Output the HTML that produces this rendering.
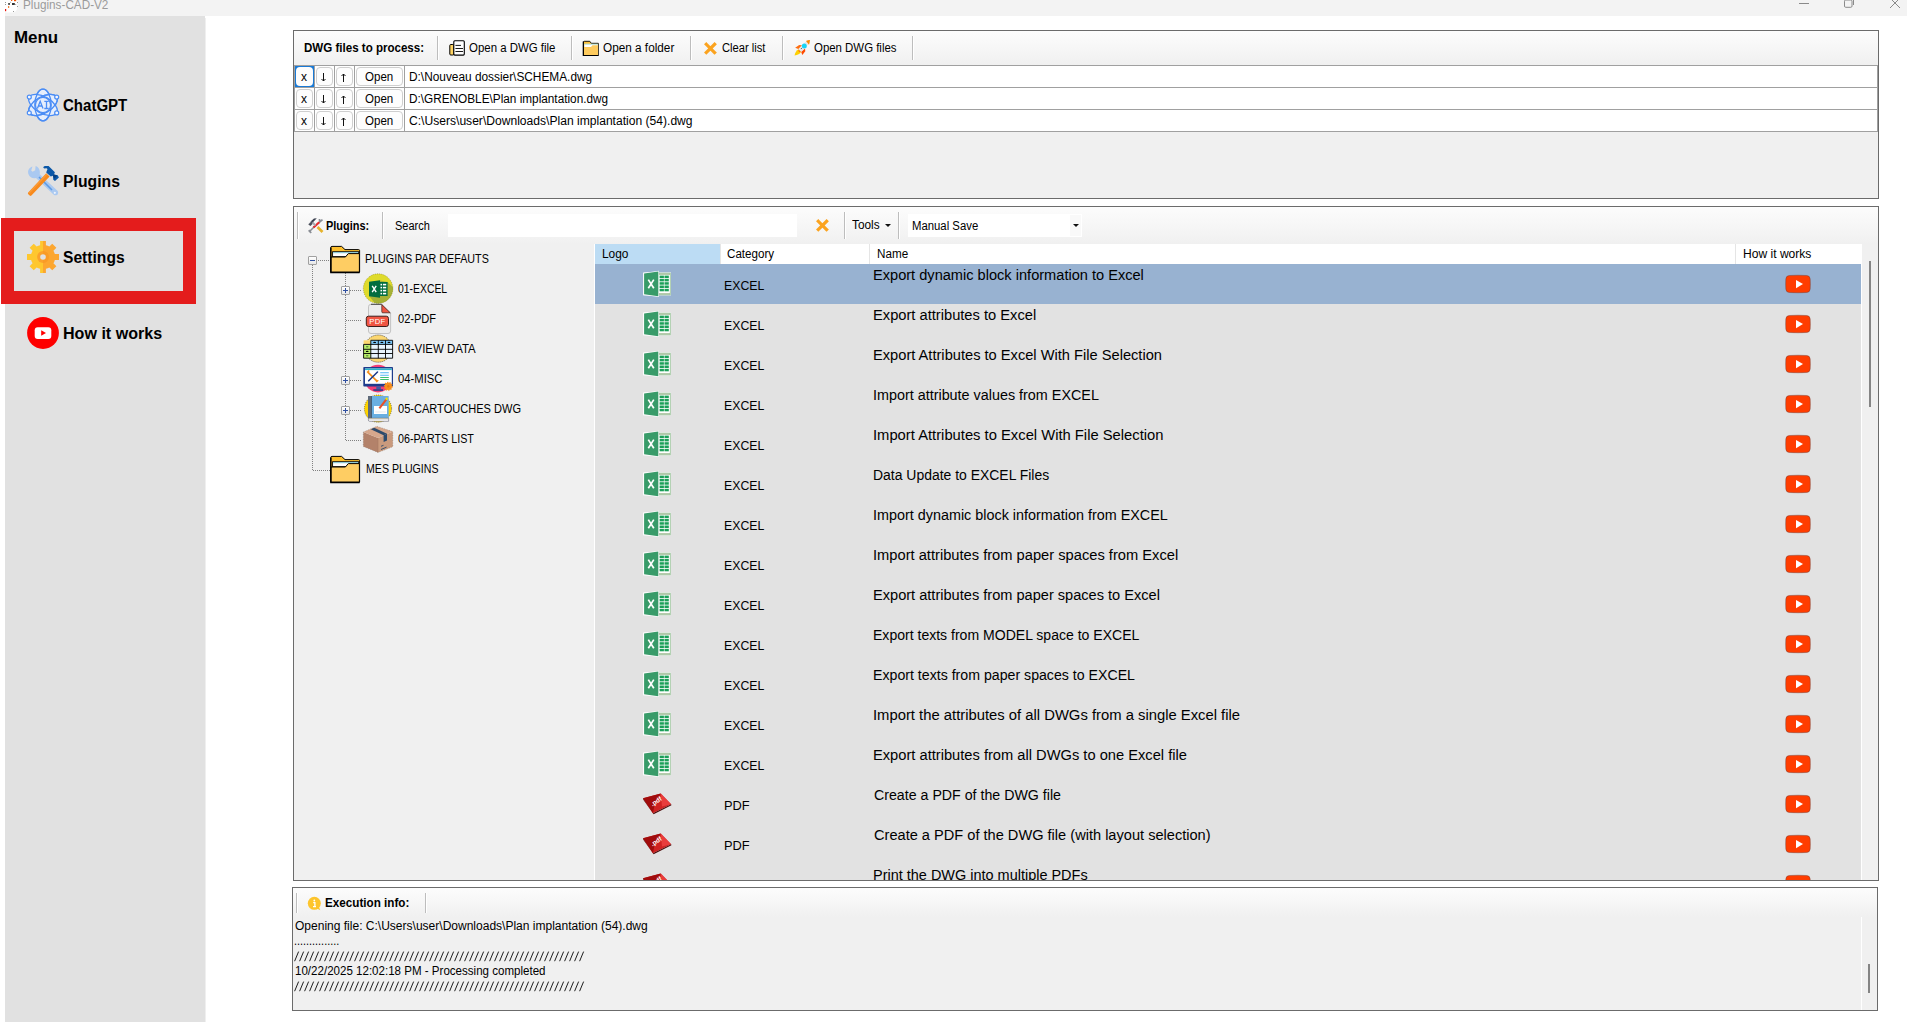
<!DOCTYPE html>
<html><head><meta charset="utf-8"><style>
html,body{margin:0;padding:0;}
body{width:1907px;height:1022px;position:relative;overflow:hidden;font-family:"Liberation Sans", sans-serif;background:#fff;}
svg{display:block}
</style></head><body>
<div style="position:absolute;left:0px;top:0px;width:1907px;height:1022px;background:#ffffff;"></div><div style="position:absolute;left:5px;top:0px;width:1902px;height:16px;background:#f3f3f3;"></div><div style="position:absolute;left:22.66px;top:-2px;font-size:12.5px;font-weight:normal;color:#9b9b9b;white-space:pre;line-height:normal;transform:scaleX(0.9384);transform-origin:0 0;">Plugins-CAD-V2</div><svg style="position:absolute;left:0px;top:0px;overflow:visible" width="20" height="14" viewBox="0 0 20 14"><path d="M5 0 H17.5 V6.5 Q17.5 12.5 11.5 12.5 H5 Z" fill="#fff"/>
<rect x="5" y="9" width="1.2" height="2.2" fill="#e8140c"/><rect x="8" y="6" width="1.2" height="2" fill="#f3843a"/>
<rect x="11" y="0" width="1.3" height="1" fill="#f05a10"/><rect x="14" y="0" width="2.2" height="1.2" fill="#f05000"/>
<rect x="8.1" y="3" width="1.9" height="1.9" fill="#555"/><rect x="12" y="3" width="2.8" height="2" fill="#333"/>
<g fill="#999"><rect x="5" y="2" width="1" height="1"/><rect x="5" y="4" width="1" height="1"/><rect x="10.2" y="1.8" width="0.9" height="1"/>
<rect x="17" y="2" width="1" height="1"/><rect x="17" y="6" width="1" height="1"/><rect x="13" y="11" width="1" height="1"/><rect x="15.2" y="4" width="1" height="1"/></g></svg><div style="position:absolute;left:1799px;top:3px;width:10px;height:1px;background:#8a8a8a;"></div><svg style="position:absolute;left:1843px;top:0px;overflow:visible" width="12" height="9" viewBox="0 0 12 9"><rect x="1.5" y="0" width="7.5" height="7.3" rx="1.2" fill="none" stroke="#8a8a8a"/><path d="M10.5 -1 V5" fill="none" stroke="#8a8a8a"/></svg><svg style="position:absolute;left:1889px;top:0px;overflow:visible" width="12" height="9" viewBox="0 0 12 9"><path d="M1 -2 L11 8 M11 -2 L1 8" stroke="#8a8a8a" stroke-width="1"/></svg><div style="position:absolute;left:5px;top:16px;width:200px;height:1006px;background:#e1e1e1;"></div><div style="position:absolute;left:205px;top:18px;width:1px;height:1004px;background:#efefef;"></div><div style="position:absolute;left:13.64px;top:29px;font-size:16px;font-weight:bold;color:#000;white-space:pre;line-height:normal;transform:scaleX(1.0575);transform-origin:0 0;">Menu</div><svg style="position:absolute;left:24px;top:86px;overflow:visible" width="38" height="38" viewBox="0 0 38 38">
<g fill="#e6eefc" stroke="#4b8df5" stroke-width="1.3">
<ellipse cx="19" cy="19" rx="8.2" ry="15.8"/>
<ellipse cx="19" cy="19" rx="8.2" ry="15.8" transform="rotate(60 19 19)"/>
<ellipse cx="19" cy="19" rx="8.2" ry="15.8" transform="rotate(-60 19 19)"/>
</g>
<g fill="none" stroke="#4b8df5" stroke-width="1.3">
<ellipse cx="19" cy="19" rx="8.2" ry="15.8"/>
<ellipse cx="19" cy="19" rx="8.2" ry="15.8" transform="rotate(60 19 19)"/>
</g>
<circle cx="19" cy="19" r="7.6" fill="#e6eefc" stroke="#4b8df5" stroke-width="1.3"/>
<g fill="#f4f7fd" stroke="#4b8df5" stroke-width="1.2">
<circle cx="5.3" cy="11.1" r="2"/><circle cx="32.7" cy="11.1" r="2"/>
<circle cx="5.3" cy="26.9" r="2"/><circle cx="32.7" cy="26.9" r="2"/>
</g>
<path d="M13.4 22.5 L16.2 15.3 L19 22.5 M14.5 20 H18" fill="none" stroke="#4b8df5" stroke-width="1.3"/>
<path d="M20.3 15.3 H24.7 M22.5 15.3 V22.5 M20.3 22.5 H24.7" fill="none" stroke="#4b8df5" stroke-width="1.3"/>
</svg><svg style="position:absolute;left:24px;top:162px;overflow:visible" width="38" height="38" viewBox="0 0 38 38">
<path d="M8.5 4.5 C5 5.5 3.2 8.8 4.5 12.3 C5.8 15.5 9 16.8 12 16 L29.5 32.5 C30.8 33.8 33 33.5 33.8 32.2 C34.6 30.8 34 29.3 32.9 28.3 L15.7 12.3 C16.6 9 15 5.2 11.6 4.1 L11.2 8.3 L8.6 9.8 L7.2 8.5 Z" fill="#aac9f1"/>
<path d="M15 15 L28 28" stroke="#5d9be6" stroke-width="1.6"/>
<circle cx="30.8" cy="30.8" r="1.1" fill="#eef3fb"/>
<path d="M4.2 30.6 L22.2 11.2 L25.6 14.6 L7.4 33.6 Q6.5 34.4 5.7 33.6 L4.3 32.2 Q3.5 31.4 4.2 30.6 Z" fill="#f88a1c"/>
<path d="M4.6 30.4 L22.4 11.4 L23.4 12.4 L5.6 31.4 Z" fill="#fba54a" opacity="0.6"/>
<path d="M19.2 5.4 Q19.8 4.1 21.4 4.1 H24.6 L30.9 10.3 L30 12.5 L33.7 13.3 L34.9 15.5 L31 18.9 L29.3 17.7 L28.9 13.8 L26.8 14.6 L22.2 10.5 L23.5 7.1 L22.5 6.2 L20.3 6.5 Z" fill="#0b58a8"/>
<path d="M28.9 13.8 L30 12.5 L33.2 13.6 L30.5 16.8 Z" fill="#063f80"/>
</svg><svg style="position:absolute;left:24px;top:238px;overflow:visible" width="38" height="38" viewBox="0 0 38 38">
<defs><clipPath id="gl"><rect x="0" y="0" width="19" height="38"/></clipPath><clipPath id="gr"><rect x="19" y="0" width="19" height="38"/></clipPath></defs>
<path d="M30.85 16.10 L35.00 16.10 L35.00 21.90 L30.85 21.90 A12.2 12.2 0 0 1 29.43 25.33 L32.36 28.26 L28.26 32.36 L25.33 29.43 A12.2 12.2 0 0 1 21.90 30.85 L21.90 35.00 L16.10 35.00 L16.10 30.85 A12.2 12.2 0 0 1 12.67 29.43 L9.74 32.36 L5.64 28.26 L8.57 25.33 A12.2 12.2 0 0 1 7.15 21.90 L3.00 21.90 L3.00 16.10 L7.15 16.10 A12.2 12.2 0 0 1 8.57 12.67 L5.64 9.74 L9.74 5.64 L12.67 8.57 A12.2 12.2 0 0 1 16.10 7.15 L16.10 3.00 L21.90 3.00 L21.90 7.15 A12.2 12.2 0 0 1 25.33 8.57 L28.26 5.64 L32.36 9.74 L29.43 12.67 A12.2 12.2 0 0 1 30.85 16.10 Z" fill="#fec72f" clip-path="url(#gl)"/>
<path d="M30.85 16.10 L35.00 16.10 L35.00 21.90 L30.85 21.90 A12.2 12.2 0 0 1 29.43 25.33 L32.36 28.26 L28.26 32.36 L25.33 29.43 A12.2 12.2 0 0 1 21.90 30.85 L21.90 35.00 L16.10 35.00 L16.10 30.85 A12.2 12.2 0 0 1 12.67 29.43 L9.74 32.36 L5.64 28.26 L8.57 25.33 A12.2 12.2 0 0 1 7.15 21.90 L3.00 21.90 L3.00 16.10 L7.15 16.10 A12.2 12.2 0 0 1 8.57 12.67 L5.64 9.74 L9.74 5.64 L12.67 8.57 A12.2 12.2 0 0 1 16.10 7.15 L16.10 3.00 L21.90 3.00 L21.90 7.15 A12.2 12.2 0 0 1 25.33 8.57 L28.26 5.64 L32.36 9.74 L29.43 12.67 A12.2 12.2 0 0 1 30.85 16.10 Z" fill="#fca62f" clip-path="url(#gr)"/>
<circle cx="19" cy="19" r="5.9" fill="#fba22c"/>
<path d="M19 13.1 A5.9 5.9 0 0 1 19 24.9 Z" fill="#f99b26"/>
<circle cx="19" cy="19" r="2.8" fill="#e1e1e1"/>
</svg><svg style="position:absolute;left:27px;top:317px;overflow:visible" width="32" height="32" viewBox="0 0 32 32">
<circle cx="16" cy="16" r="15.9" fill="#fe0000"/>
<rect x="7.7" y="10.2" width="16.6" height="11.8" rx="3" fill="#fff"/>
<path d="M14.2 13.2 L19 16 L14.2 18.8 Z" fill="#fe0000"/>
</svg><div style="position:absolute;left:63.40px;top:97px;font-size:16px;font-weight:bold;color:#000;white-space:pre;line-height:normal;transform:scaleX(0.9392);transform-origin:0 0;">ChatGPT</div><div style="position:absolute;left:63.02px;top:173px;font-size:16px;font-weight:bold;color:#000;white-space:pre;line-height:normal;transform:scaleX(0.9845);transform-origin:0 0;">Plugins</div><div style="position:absolute;left:63.30px;top:249px;font-size:16px;font-weight:bold;color:#000;white-space:pre;line-height:normal;transform:scaleX(0.9760);transform-origin:0 0;">Settings</div><div style="position:absolute;left:62.60px;top:325px;font-size:16px;font-weight:bold;color:#000;white-space:pre;line-height:normal;transform:scaleX(1.0043);transform-origin:0 0;">How it works</div><div style="position:absolute;left:1px;top:218px;width:169px;height:60px;border:13px solid #e41c1c;"></div><div style="position:absolute;left:293px;top:30px;width:1586px;height:169px;background:#f0f0f0;box-sizing:border-box;border:1px solid #6b6b6b;"></div><div style="position:absolute;left:294px;top:31px;width:1584px;height:34px;background:linear-gradient(#fcfcfc,#f7f7f7 45%,#f0f0f0);"></div><div style="position:absolute;left:304.30px;top:41px;font-size:12.5px;font-weight:bold;color:#000;white-space:pre;line-height:normal;transform:scaleX(0.9245);transform-origin:0 0;">DWG files to process:</div><div style="position:absolute;left:437px;top:36px;width:1px;height:24px;background:#bdbdbd;"></div><div style="position:absolute;left:438px;top:36px;width:1px;height:24px;background:#ffffff;"></div><svg style="position:absolute;left:444px;top:36px;overflow:visible" width="26" height="24" viewBox="0 0 26 24">
<rect x="5.8" y="8.5" width="4" height="10.5" rx="1" fill="#ffd463" stroke="#000" stroke-width="1"/>
<rect x="9.8" y="4.7" width="10.5" height="14.4" rx="1" fill="#fff" stroke="#000" stroke-width="1.1"/>
<path d="M11.8 9.4 H16.6 M11.8 12.5 H18.6 M11.8 15.5 H18.6" stroke="#000" stroke-width="0.9" stroke-linecap="round"/>
</svg><div style="position:absolute;left:468.50px;top:41px;font-size:12px;font-weight:normal;color:#000;white-space:pre;line-height:normal;transform:scaleX(0.9536);transform-origin:0 0;">Open a DWG file</div><div style="position:absolute;left:571px;top:36px;width:1px;height:24px;background:#bdbdbd;"></div><div style="position:absolute;left:572px;top:36px;width:1px;height:24px;background:#ffffff;"></div><svg style="position:absolute;left:578px;top:36px;overflow:visible" width="26" height="24" viewBox="0 0 26 24">
<path d="M5.5 19.3 V6 Q5.5 5.3 6.3 5.3 H11.8 L13.3 7.3 H20.3 V19.3 Z" fill="#fec13b" stroke="#000" stroke-width="0.9"/>
<path d="M6.3 8.3 H19.8 V11 H6.3 Z" fill="#fff"/>
<path d="M6.3 8.2 H19.8" stroke="#9be8f7" stroke-width="0.8"/>
<path d="M6 11.2 H12.8 L14.5 9.3 H20 V19.3 H6 Z" fill="#fecb5e"/>
<path d="M5.3 5.6 V19.5 H20.6" fill="none" stroke="#000" stroke-width="1.2"/>
</svg><div style="position:absolute;left:602.50px;top:41px;font-size:12px;font-weight:normal;color:#000;white-space:pre;line-height:normal;transform:scaleX(0.9805);transform-origin:0 0;">Open a folder</div><div style="position:absolute;left:690px;top:36px;width:1px;height:24px;background:#bdbdbd;"></div><div style="position:absolute;left:691px;top:36px;width:1px;height:24px;background:#ffffff;"></div><svg style="position:absolute;left:700px;top:38px;overflow:visible" width="20" height="20" viewBox="0 0 20 20"><path d="M6.3 6.3 L14.6 14.6 M14.6 6.3 L6.3 14.6" stroke="#fba31f" stroke-width="3.2" stroke-linecap="square"/></svg><div style="position:absolute;left:721.60px;top:41px;font-size:12px;font-weight:normal;color:#000;white-space:pre;line-height:normal;transform:scaleX(0.9315);transform-origin:0 0;">Clear list</div><div style="position:absolute;left:782px;top:36px;width:1px;height:24px;background:#bdbdbd;"></div><div style="position:absolute;left:783px;top:36px;width:1px;height:24px;background:#ffffff;"></div><svg style="position:absolute;left:790px;top:36px;overflow:visible" width="26" height="24" viewBox="0 0 26 24">
<path d="M4.5 19.5 C5 16.5 6.5 14.5 8.6 13.2 L11.2 15.8 C10 17.8 7.8 19.2 4.5 19.5 Z" fill="#fed000"/>
<path d="M8.8 13 L11.4 15.6 L9.5 16.2 L8.3 14.9 Z" fill="#fe7a10"/>
<path d="M5.2 11.8 L9.2 9 L12 9.3 L8.4 13 Z" fill="#fe6d10"/>
<path d="M12.3 19 L15.3 15.3 L15 12.5 L11.2 16.1 Z" fill="#fe4a00"/>
<path d="M8.5 13.2 L15.8 5.8 C17 4.8 18.8 4.2 19.8 4.2 C19.8 5.5 19.2 7.2 18.2 8.4 L11 15.7 Z" fill="#e6e6ea"/>
<path d="M16 4.9 C17.4 4.3 19 4 19.9 4 C19.9 5.3 19.6 7.2 19 8.7 Z" fill="#fe8a00"/>
<circle cx="14.3" cy="10" r="2.5" fill="#19d4f5"/>
<circle cx="11.4" cy="12.5" r="0.6" fill="#555"/>
</svg><div style="position:absolute;left:813.50px;top:41px;font-size:12px;font-weight:normal;color:#000;white-space:pre;line-height:normal;transform:scaleX(0.9517);transform-origin:0 0;">Open DWG files</div><div style="position:absolute;left:912px;top:36px;width:1px;height:24px;background:#bdbdbd;"></div><div style="position:absolute;left:913px;top:36px;width:1px;height:24px;background:#ffffff;"></div><div style="position:absolute;left:294px;top:65px;width:1583px;height:67px;background:#ffffff;"></div><div style="position:absolute;left:294px;top:65px;width:1583px;height:1px;background:#a0a0a0;"></div><div style="position:absolute;left:294px;top:87px;width:1583px;height:1px;background:#a0a0a0;"></div><div style="position:absolute;left:294px;top:109px;width:1583px;height:1px;background:#a0a0a0;"></div><div style="position:absolute;left:294px;top:131px;width:1583px;height:1px;background:#a0a0a0;"></div><div style="position:absolute;left:1877px;top:65px;width:1px;height:67px;background:#a0a0a0;"></div><div style="position:absolute;left:294px;top:65px;width:1px;height:22px;background:#a0a0a0;"></div><div style="position:absolute;left:314px;top:65px;width:1px;height:22px;background:#a0a0a0;"></div><div style="position:absolute;left:334px;top:65px;width:1px;height:22px;background:#a0a0a0;"></div><div style="position:absolute;left:354px;top:65px;width:1px;height:22px;background:#a0a0a0;"></div><div style="position:absolute;left:404px;top:65px;width:1px;height:22px;background:#a0a0a0;"></div><div style="position:absolute;left:296px;top:67px;width:17px;height:19px;background:#fdfdfd;box-sizing:border-box;border:1px solid #cfcfcf;border-radius:4px;"></div><div style="position:absolute;left:316px;top:67px;width:17px;height:19px;background:#fdfdfd;box-sizing:border-box;border:1px solid #cfcfcf;border-radius:4px;"></div><div style="position:absolute;left:336px;top:67px;width:17px;height:19px;background:#fdfdfd;box-sizing:border-box;border:1px solid #cfcfcf;border-radius:4px;"></div><div style="position:absolute;left:356px;top:67px;width:47px;height:19px;background:#fdfdfd;box-sizing:border-box;border:1px solid #cfcfcf;border-radius:4px;"></div><div style="position:absolute;left:301.00px;top:70px;font-size:12px;font-weight:normal;color:#000;white-space:pre;line-height:normal;">x</div><svg style="position:absolute;left:321px;top:73px;overflow:visible" width="6" height="9" viewBox="0 0 6 9"><path d="M2.5 0 V8 M0.5 6 L2.5 8 L4.5 6" fill="none" stroke="#111" stroke-width="1"/></svg><svg style="position:absolute;left:341px;top:73px;overflow:visible" width="6" height="9" viewBox="0 0 6 9"><path d="M2.5 9 V1 M0.5 3 L2.5 1 L4.5 3" fill="none" stroke="#111" stroke-width="1"/></svg><div style="position:absolute;left:364.60px;top:70px;font-size:12px;font-weight:normal;color:#000;white-space:pre;line-height:normal;transform:scaleX(0.9623);transform-origin:0 0;">Open</div><div style="position:absolute;left:408.60px;top:70px;font-size:12px;font-weight:normal;color:#000;white-space:pre;line-height:normal;transform:scaleX(0.9879);transform-origin:0 0;">D:\Nouveau dossier\SCHEMA.dwg</div><div style="position:absolute;left:294px;top:87px;width:1px;height:22px;background:#a0a0a0;"></div><div style="position:absolute;left:314px;top:87px;width:1px;height:22px;background:#a0a0a0;"></div><div style="position:absolute;left:334px;top:87px;width:1px;height:22px;background:#a0a0a0;"></div><div style="position:absolute;left:354px;top:87px;width:1px;height:22px;background:#a0a0a0;"></div><div style="position:absolute;left:404px;top:87px;width:1px;height:22px;background:#a0a0a0;"></div><div style="position:absolute;left:296px;top:89px;width:17px;height:19px;background:#fdfdfd;box-sizing:border-box;border:1px solid #cfcfcf;border-radius:4px;"></div><div style="position:absolute;left:316px;top:89px;width:17px;height:19px;background:#fdfdfd;box-sizing:border-box;border:1px solid #cfcfcf;border-radius:4px;"></div><div style="position:absolute;left:336px;top:89px;width:17px;height:19px;background:#fdfdfd;box-sizing:border-box;border:1px solid #cfcfcf;border-radius:4px;"></div><div style="position:absolute;left:356px;top:89px;width:47px;height:19px;background:#fdfdfd;box-sizing:border-box;border:1px solid #cfcfcf;border-radius:4px;"></div><div style="position:absolute;left:301.00px;top:92px;font-size:12px;font-weight:normal;color:#000;white-space:pre;line-height:normal;">x</div><svg style="position:absolute;left:321px;top:95px;overflow:visible" width="6" height="9" viewBox="0 0 6 9"><path d="M2.5 0 V8 M0.5 6 L2.5 8 L4.5 6" fill="none" stroke="#111" stroke-width="1"/></svg><svg style="position:absolute;left:341px;top:95px;overflow:visible" width="6" height="9" viewBox="0 0 6 9"><path d="M2.5 9 V1 M0.5 3 L2.5 1 L4.5 3" fill="none" stroke="#111" stroke-width="1"/></svg><div style="position:absolute;left:364.60px;top:92px;font-size:12px;font-weight:normal;color:#000;white-space:pre;line-height:normal;transform:scaleX(0.9623);transform-origin:0 0;">Open</div><div style="position:absolute;left:408.60px;top:92px;font-size:12px;font-weight:normal;color:#000;white-space:pre;line-height:normal;transform:scaleX(0.9818);transform-origin:0 0;">D:\GRENOBLE\Plan implantation.dwg</div><div style="position:absolute;left:294px;top:109px;width:1px;height:22px;background:#a0a0a0;"></div><div style="position:absolute;left:314px;top:109px;width:1px;height:22px;background:#a0a0a0;"></div><div style="position:absolute;left:334px;top:109px;width:1px;height:22px;background:#a0a0a0;"></div><div style="position:absolute;left:354px;top:109px;width:1px;height:22px;background:#a0a0a0;"></div><div style="position:absolute;left:404px;top:109px;width:1px;height:22px;background:#a0a0a0;"></div><div style="position:absolute;left:296px;top:111px;width:17px;height:19px;background:#fdfdfd;box-sizing:border-box;border:1px solid #cfcfcf;border-radius:4px;"></div><div style="position:absolute;left:316px;top:111px;width:17px;height:19px;background:#fdfdfd;box-sizing:border-box;border:1px solid #cfcfcf;border-radius:4px;"></div><div style="position:absolute;left:336px;top:111px;width:17px;height:19px;background:#fdfdfd;box-sizing:border-box;border:1px solid #cfcfcf;border-radius:4px;"></div><div style="position:absolute;left:356px;top:111px;width:47px;height:19px;background:#fdfdfd;box-sizing:border-box;border:1px solid #cfcfcf;border-radius:4px;"></div><div style="position:absolute;left:301.00px;top:114px;font-size:12px;font-weight:normal;color:#000;white-space:pre;line-height:normal;">x</div><svg style="position:absolute;left:321px;top:117px;overflow:visible" width="6" height="9" viewBox="0 0 6 9"><path d="M2.5 0 V8 M0.5 6 L2.5 8 L4.5 6" fill="none" stroke="#111" stroke-width="1"/></svg><svg style="position:absolute;left:341px;top:117px;overflow:visible" width="6" height="9" viewBox="0 0 6 9"><path d="M2.5 9 V1 M0.5 3 L2.5 1 L4.5 3" fill="none" stroke="#111" stroke-width="1"/></svg><div style="position:absolute;left:364.60px;top:114px;font-size:12px;font-weight:normal;color:#000;white-space:pre;line-height:normal;transform:scaleX(0.9623);transform-origin:0 0;">Open</div><div style="position:absolute;left:408.60px;top:114px;font-size:12px;font-weight:normal;color:#000;white-space:pre;line-height:normal;transform:scaleX(1.0075);transform-origin:0 0;">C:\Users\user\Downloads\Plan implantation (54).dwg</div><div style="position:absolute;left:295px;top:66px;width:19px;height:21px;background:#1a7ad6;"></div><div style="position:absolute;left:296px;top:67px;width:17px;height:19px;background:#fdfdfd;border-radius:4px;"></div><div style="position:absolute;left:301.00px;top:70px;font-size:12px;font-weight:normal;color:#000;white-space:pre;line-height:normal;">x</div><div style="position:absolute;left:293px;top:206px;width:1586px;height:675px;background:#f0f0f0;box-sizing:border-box;border:1px solid #6b6b6b;"></div><div style="position:absolute;left:294px;top:207px;width:1584px;height:37px;background:linear-gradient(#fcfcfc,#f7f7f7 45%,#f0f0f0);"></div><div style="position:absolute;left:297px;top:212px;width:1px;height:27px;background:#bdbdbd;"></div><div style="position:absolute;left:298px;top:212px;width:1px;height:27px;background:#ffffff;"></div><svg style="position:absolute;left:304px;top:214px;overflow:visible" width="22" height="22" viewBox="0 0 22 22">
<path d="M5 18 L12 11" stroke="#8a8e95" stroke-width="1.6"/>
<path d="M4.8 16 L7.2 19" stroke="#8a8e95" stroke-width="1.6"/>
<path d="M15.5 5 L15.7 8 L18.5 5.7" fill="none" stroke="#8a8e95" stroke-width="1.7"/>
<path d="M9.5 13.5 L15.2 8.3" stroke="#e92b2b" stroke-width="2.2"/>
<path d="M13.5 13 L18.5 18" stroke="#e6b32c" stroke-width="2.6"/>
<path d="M4.5 9.8 L7 7.2 L8.5 8.7 L12.8 4.3 L10 4.5 L8.6 5.7 L6.2 7.8 L5 9.5 Z" fill="#3d4250"/>
<path d="M4.3 10.5 L6.5 12 L9.5 9 L7.5 7.3 Z" fill="#4b505c"/>
<path d="M8.5 8.5 L11.5 11.5" stroke="#a3a7ae" stroke-width="2"/>
</svg><div style="position:absolute;left:326.20px;top:219px;font-size:12.5px;font-weight:bold;color:#000;white-space:pre;line-height:normal;transform:scaleX(0.8745);transform-origin:0 0;">Plugins:</div><div style="position:absolute;left:382px;top:212px;width:1px;height:27px;background:#bdbdbd;"></div><div style="position:absolute;left:383px;top:212px;width:1px;height:27px;background:#ffffff;"></div><div style="position:absolute;left:395.20px;top:219px;font-size:12px;font-weight:normal;color:#000;white-space:pre;line-height:normal;transform:scaleX(0.9157);transform-origin:0 0;">Search</div><div style="position:absolute;left:448px;top:214px;width:349px;height:23px;background:#ffffff;"></div><svg style="position:absolute;left:812px;top:215px;overflow:visible" width="20" height="20" viewBox="0 0 20 20"><path d="M6.3 6.3 L14.6 14.6 M14.6 6.3 L6.3 14.6" stroke="#fba31f" stroke-width="3.2" stroke-linecap="square"/></svg><div style="position:absolute;left:844px;top:212px;width:1px;height:27px;background:#bdbdbd;"></div><div style="position:absolute;left:845px;top:212px;width:1px;height:27px;background:#ffffff;"></div><div style="position:absolute;left:852.30px;top:218px;font-size:12px;font-weight:normal;color:#000;white-space:pre;line-height:normal;transform:scaleX(0.9852);transform-origin:0 0;">Tools</div><svg style="position:absolute;left:885px;top:224px;overflow:visible" width="6" height="3" viewBox="0 0 6 3"><path d="M0 0 H6 L3 3 Z" fill="#111"/></svg><div style="position:absolute;left:898px;top:212px;width:1px;height:27px;background:#bdbdbd;"></div><div style="position:absolute;left:899px;top:212px;width:1px;height:27px;background:#ffffff;"></div><div style="position:absolute;left:908px;top:214px;width:174px;height:23px;background:#ffffff;"></div><div style="position:absolute;left:1070px;top:215px;width:11px;height:21px;background:#f9f9f9;"></div><div style="position:absolute;left:912.40px;top:219px;font-size:12px;font-weight:normal;color:#000;white-space:pre;line-height:normal;transform:scaleX(0.9450);transform-origin:0 0;">Manual Save</div><svg style="position:absolute;left:1073px;top:224px;overflow:visible" width="6" height="3" viewBox="0 0 6 3"><path d="M0 0 H6 L3 3 Z" fill="#111"/></svg><div style="position:absolute;left:294px;top:244px;width:300px;height:636px;background:#f0f0f0;"></div><div style="position:absolute;left:594px;top:244px;width:1px;height:636px;background:#ffffff;"></div><div style="position:absolute;left:312px;top:265px;width:1px;height:206px;background:repeating-linear-gradient(#808080 0 1px,transparent 1px 2px);"></div><div style="position:absolute;left:318px;top:260px;width:12px;height:1px;background:repeating-linear-gradient(90deg,#808080 0 1px,transparent 1px 2px);"></div><div style="position:absolute;left:313px;top:470px;width:17px;height:1px;background:repeating-linear-gradient(90deg,#808080 0 1px,transparent 1px 2px);"></div><div style="position:absolute;left:345px;top:273px;width:1px;height:168px;background:repeating-linear-gradient(#808080 0 1px,transparent 1px 2px);"></div><div style="position:absolute;left:350px;top:290px;width:12px;height:1px;background:repeating-linear-gradient(90deg,#808080 0 1px,transparent 1px 2px);"></div><div style="position:absolute;left:346px;top:320px;width:16px;height:1px;background:repeating-linear-gradient(90deg,#808080 0 1px,transparent 1px 2px);"></div><div style="position:absolute;left:346px;top:350px;width:16px;height:1px;background:repeating-linear-gradient(90deg,#808080 0 1px,transparent 1px 2px);"></div><div style="position:absolute;left:350px;top:380px;width:12px;height:1px;background:repeating-linear-gradient(90deg,#808080 0 1px,transparent 1px 2px);"></div><div style="position:absolute;left:350px;top:410px;width:12px;height:1px;background:repeating-linear-gradient(90deg,#808080 0 1px,transparent 1px 2px);"></div><div style="position:absolute;left:346px;top:440px;width:16px;height:1px;background:repeating-linear-gradient(90deg,#808080 0 1px,transparent 1px 2px);"></div><div style="position:absolute;left:308px;top:256px;width:9px;height:9px;box-sizing:border-box;border:1px solid #a0a0a0;border-radius:1px;background:linear-gradient(#ffffff,#e6e6e6);"></div><div style="position:absolute;left:310px;top:260px;width:5px;height:1px;background:#2f4f9f;"></div><div style="position:absolute;left:341px;top:286px;width:9px;height:9px;box-sizing:border-box;border:1px solid #a0a0a0;border-radius:1px;background:linear-gradient(#ffffff,#e6e6e6);"></div><div style="position:absolute;left:343px;top:290px;width:5px;height:1px;background:#2f4f9f;"></div><div style="position:absolute;left:345px;top:288px;width:1px;height:5px;background:#2f4f9f;"></div><div style="position:absolute;left:341px;top:376px;width:9px;height:9px;box-sizing:border-box;border:1px solid #a0a0a0;border-radius:1px;background:linear-gradient(#ffffff,#e6e6e6);"></div><div style="position:absolute;left:343px;top:380px;width:5px;height:1px;background:#2f4f9f;"></div><div style="position:absolute;left:345px;top:378px;width:1px;height:5px;background:#2f4f9f;"></div><div style="position:absolute;left:341px;top:406px;width:9px;height:9px;box-sizing:border-box;border:1px solid #a0a0a0;border-radius:1px;background:linear-gradient(#ffffff,#e6e6e6);"></div><div style="position:absolute;left:343px;top:410px;width:5px;height:1px;background:#2f4f9f;"></div><div style="position:absolute;left:345px;top:408px;width:1px;height:5px;background:#2f4f9f;"></div><svg style="position:absolute;left:326px;top:242px;overflow:visible" width="38" height="34" viewBox="0 0 38 34">
<path d="M4.8 30 V5.5 Q4.8 4.4 6 4.4 H15.6 L19 7.6 H32.6 Q33.6 7.6 33.6 8.6 V30 Z" fill="#fdbf2d" stroke="#000" stroke-width="1"/>
<rect x="6.6" y="9.7" width="26" height="5" fill="#fff" stroke="#000" stroke-width="0.9"/>
<path d="M7 10.6 H32.2" stroke="#8ec9d6" stroke-width="1.2"/>
<path d="M5 15 H19.4 L22.3 11.6 H33.4 V30.2 H5 Z" fill="#fecd63" stroke="#000" stroke-width="1"/>
<path d="M4.8 5.5 V30.5 H33.6" fill="none" stroke="#000" stroke-width="1.3"/>
</svg><svg style="position:absolute;left:326px;top:452px;overflow:visible" width="38" height="34" viewBox="0 0 38 34">
<path d="M4.8 30 V5.5 Q4.8 4.4 6 4.4 H15.6 L19 7.6 H32.6 Q33.6 7.6 33.6 8.6 V30 Z" fill="#fdbf2d" stroke="#000" stroke-width="1"/>
<rect x="6.6" y="9.7" width="26" height="5" fill="#fff" stroke="#000" stroke-width="0.9"/>
<path d="M7 10.6 H32.2" stroke="#8ec9d6" stroke-width="1.2"/>
<path d="M5 15 H19.4 L22.3 11.6 H33.4 V30.2 H5 Z" fill="#fecd63" stroke="#000" stroke-width="1"/>
<path d="M4.8 5.5 V30.5 H33.6" fill="none" stroke="#000" stroke-width="1.3"/>
</svg><svg style="position:absolute;left:360px;top:272px;overflow:visible" width="36" height="34" viewBox="0 0 36 34">
<defs><clipPath id="c1"><circle cx="18.1" cy="16.6" r="14.8"/></clipPath></defs>
<circle cx="18.1" cy="16.6" r="14.8" fill="#dfdb2b"/>
<path d="M9 24 L20 8.5 L27.5 10 L40 22 L22 40 Z" fill="#a6b235" clip-path="url(#c1)"/>
<circle cx="18.1" cy="16.6" r="14.8" fill="none" stroke="#55552a" stroke-width="0.6" stroke-dasharray="1 1.2" opacity="0.7"/>
<rect x="20" y="10" width="7.6" height="14" fill="#016d3f"/>
<path d="M9 9.8 L20 8.3 V25.8 L9 24.2 Z" fill="#016d3f"/>
<path d="M12.2 13.9 L16.2 20.2 M16.2 13.9 L12.2 20.2" stroke="#fff" stroke-width="1.4"/>
<g fill="#fff"><rect x="20.5" y="11.8" width="1.6" height="1.6"/><rect x="23" y="11.8" width="3.2" height="1.6"/>
<rect x="20.5" y="14.8" width="1.6" height="1.6"/><rect x="23" y="14.8" width="3.2" height="1.6"/>
<rect x="20.5" y="17.8" width="1.6" height="1.6"/><rect x="23" y="17.8" width="3.2" height="1.6"/>
<rect x="20.5" y="20.8" width="1.6" height="1.6"/><rect x="23" y="20.8" width="3.2" height="1.6"/></g>
</svg><svg style="position:absolute;left:360px;top:302px;overflow:visible" width="36" height="34" viewBox="0 0 36 34">
<path d="M11 2.3 H21.8 L30.6 10.8 V29 Q30.6 31.5 28 31.5 H11 Q8.5 31.5 8.5 29 V4.8 Q8.5 2.3 11 2.3 Z" fill="#ececec" stroke="#bdbdbd" stroke-width="0.9"/>
<path d="M11 2.3 H21.8" stroke="#222" stroke-width="0.8"/>
<path d="M21.8 2.6 V9.8 Q21.8 10.8 22.8 10.8 H30.2 Z" fill="#f05542" stroke="#3a1a14" stroke-width="0.7"/>
<rect x="6.3" y="14.2" width="22.2" height="10.3" rx="2.2" fill="#f05542" stroke="#2a1010" stroke-width="0.9"/>
<text x="17.4" y="22.2" font-family="Liberation Sans" font-size="7.6" fill="#fff" text-anchor="middle" letter-spacing="0.3">PDF</text>
</svg><svg style="position:absolute;left:360px;top:332px;overflow:visible" width="36" height="34" viewBox="0 0 36 34">
<circle cx="18.2" cy="16.6" r="13.6" fill="#fcd771" stroke="#222" stroke-width="0.7" stroke-dasharray="1 1"/>
<rect x="3.6" y="8.3" width="29" height="17.9" fill="#e8f4fd"/>
<rect x="10.8" y="8.3" width="21.8" height="4.1" fill="#7dc7f9"/>
<rect x="3.6" y="12.4" width="7.2" height="13.8" fill="#b9ee6a"/>
<rect x="3.6" y="8.3" width="7.2" height="4.1" fill="#fcd771"/>
<g stroke="#000" stroke-width="0.9" fill="none">
<path d="M10.8 8.3 H32.6 V26.2 H3.6 V12.4 H32.6 M3.6 17.3 H32.6 M3.6 21.5 H32.6 M10.8 8.3 V26.2 M18.3 8.3 V26.2 M25.5 8.3 V26.2"/>
</g>
<g fill="#000"><ellipse cx="14.6" cy="10.4" rx="1.5" ry="0.6"/><ellipse cx="21.9" cy="10.4" rx="1.5" ry="0.6"/><ellipse cx="29" cy="10.4" rx="1.5" ry="0.6"/>
<ellipse cx="7.2" cy="19.4" rx="1.4" ry="0.6"/></g>
<g fill="#5a8a3a"><ellipse cx="7.2" cy="14.8" rx="1.4" ry="0.7"/><ellipse cx="7.2" cy="23.8" rx="1.4" ry="0.7"/></g>
</svg><svg style="position:absolute;left:360px;top:362px;overflow:visible" width="36" height="34" viewBox="0 0 36 34">
<defs><clipPath id="c4"><circle cx="18" cy="16.6" r="13.8"/></clipPath></defs>
<circle cx="18" cy="16.6" r="13.8" fill="#f33f76"/>
<rect x="3.3" y="5" width="29.7" height="19.6" rx="0.8" fill="#1f3c8c"/>
<rect x="5" y="6.5" width="26.8" height="15.3" fill="#fff"/>
<rect x="5" y="6.5" width="26.8" height="1.6" fill="#2bb3c9"/>
<rect x="16.3" y="24.5" width="4.6" height="2.8" fill="#3d5da3"/>
<rect x="13.3" y="27.3" width="9.7" height="1.5" fill="#1f3c8c"/>
<path d="M7.8 10.2 L17.2 19.3" stroke="#f7901e" stroke-width="1.8"/>
<path d="M7 10.5 L9.2 8.6 M16.2 20 L18.3 18.2" stroke="#f7901e" stroke-width="1.5"/>
<path d="M8.7 18.8 L17.5 10" stroke="#1f3c8c" stroke-width="1.6" stroke-linecap="round"/>
<path d="M20.2 10.5 H28.8 M20.2 13.5 H28.8" stroke="#7cc8f8" stroke-width="1"/>
<path d="M20.2 12 H28.8" stroke="#c8e6fb" stroke-width="1.5"/>
<path d="M20.2 15.5 H28.8 M20.2 17.5 H28.8" stroke="#3cc070" stroke-width="1"/>
<circle cx="28.3" cy="24.3" r="3.6" fill="#f78f1f" stroke="#f78f1f" stroke-width="1.8" stroke-dasharray="1.2 1"/>
<circle cx="28.3" cy="24.3" r="1.2" fill="#e07a10"/>
</svg><svg style="position:absolute;left:360px;top:392px;overflow:visible" width="36" height="34" viewBox="0 0 36 34">
<circle cx="18" cy="16.6" r="13.6" fill="#fdd300" stroke="#333" stroke-width="0.6" stroke-dasharray="1 1.2"/>
<rect x="8" y="4" width="3.8" height="22.3" fill="#5e6a79"/>
<rect x="11" y="4" width="1" height="22.3" fill="#3e4856"/>
<rect x="11.8" y="4" width="16.9" height="22.3" rx="0.6" fill="#6aafe1"/>
<path d="M8.4 26.2 H28.6 V29.3 H9.5 Q8.4 29.3 8.4 28 Z" fill="#fff" stroke="#667" stroke-width="0.6"/>
<path d="M8.6 27.7 H28.4" stroke="#bbb" stroke-width="0.5"/>
<rect x="14" y="14" width="13" height="8" fill="#fff"/>
<path d="M15.3 19.5 H25.8 M15.3 20.6 H25.8" stroke="#e6e6e6" stroke-width="0.5"/>
<path d="M19.4 16.3 L26.3 7.3" stroke="#e8512b" stroke-width="2.1"/>
<circle cx="26.6" cy="6.7" r="1.2" fill="#f3e600"/>
</svg><svg style="position:absolute;left:360px;top:422px;overflow:visible" width="36" height="34" viewBox="0 0 36 34">
<path d="M3.3 10 L18 16 L18 30.5 L3.3 24.5 Z" fill="#b3826a"/>
<path d="M18 16 L32.8 9.6 L32.8 24.8 L18 30.5 Z" fill="#c99a7d"/>
<path d="M3.3 10 L16.8 4.2 L32.8 9.6 L18 16 Z" fill="#d6a78c"/>
<path d="M10.8 7.2 L14.2 5.8 L27 11.8 L23.6 13.2 Z" fill="#2d4a6b"/>
<path d="M23.6 13.2 L27 11.8 L27 18.6 L23.6 20 Z" fill="#2d4a6b"/>
<path d="M18 16 V30.5" stroke="#a87a62" stroke-width="0.6"/>
<path d="M21 24.3 L23.5 23.3 M21 27.5 L26.5 25.2" stroke="#2d4a6b" stroke-width="0.9"/>
<path d="M3.3 10 L16.8 4.2 L32.8 9.6 V24.8 L18 30.5 L3.3 24.5 Z" fill="none" stroke="#555" stroke-width="0.5" stroke-dasharray="1 1.5" opacity="0.6"/>
</svg><div style="position:absolute;left:365.20px;top:252px;font-size:12px;font-weight:normal;color:#000;white-space:pre;line-height:normal;transform:scaleX(0.8941);transform-origin:0 0;">PLUGINS PAR DEFAUTS</div><div style="position:absolute;left:398.00px;top:282px;font-size:12px;font-weight:normal;color:#000;white-space:pre;line-height:normal;transform:scaleX(0.8663);transform-origin:0 0;">01-EXCEL</div><div style="position:absolute;left:398.00px;top:312px;font-size:12px;font-weight:normal;color:#000;white-space:pre;line-height:normal;transform:scaleX(0.9216);transform-origin:0 0;">02-PDF</div><div style="position:absolute;left:398.00px;top:342px;font-size:12px;font-weight:normal;color:#000;white-space:pre;line-height:normal;transform:scaleX(0.9526);transform-origin:0 0;">03-VIEW DATA</div><div style="position:absolute;left:398.00px;top:372px;font-size:12px;font-weight:normal;color:#000;white-space:pre;line-height:normal;transform:scaleX(0.9375);transform-origin:0 0;">04-MISC</div><div style="position:absolute;left:398.00px;top:402px;font-size:12px;font-weight:normal;color:#000;white-space:pre;line-height:normal;transform:scaleX(0.9209);transform-origin:0 0;">05-CARTOUCHES DWG</div><div style="position:absolute;left:398.00px;top:432px;font-size:12px;font-weight:normal;color:#000;white-space:pre;line-height:normal;transform:scaleX(0.8938);transform-origin:0 0;">06-PARTS LIST</div><div style="position:absolute;left:365.50px;top:462px;font-size:12px;font-weight:normal;color:#000;white-space:pre;line-height:normal;transform:scaleX(0.8840);transform-origin:0 0;">MES PLUGINS</div><div style="position:absolute;left:595px;top:244px;width:1266px;height:20px;background:#ffffff;"></div><div style="position:absolute;left:595px;top:244px;width:125px;height:20px;background:#bcdcf4;"></div><div style="position:absolute;left:720px;top:244px;width:1px;height:20px;background:#e5e5e5;"></div><div style="position:absolute;left:869px;top:244px;width:1px;height:20px;background:#e5e5e5;"></div><div style="position:absolute;left:1735px;top:244px;width:1px;height:20px;background:#e5e5e5;"></div><div style="position:absolute;left:602.00px;top:247px;font-size:12px;font-weight:normal;color:#000;white-space:pre;line-height:normal;transform:scaleX(0.9918);transform-origin:0 0;">Logo</div><div style="position:absolute;left:727.40px;top:247px;font-size:12px;font-weight:normal;color:#000;white-space:pre;line-height:normal;transform:scaleX(0.9673);transform-origin:0 0;">Category</div><div style="position:absolute;left:877.40px;top:247px;font-size:12px;font-weight:normal;color:#000;white-space:pre;line-height:normal;transform:scaleX(0.9741);transform-origin:0 0;">Name</div><div style="position:absolute;left:1743.40px;top:247px;font-size:12px;font-weight:normal;color:#000;white-space:pre;line-height:normal;transform:scaleX(1.0057);transform-origin:0 0;">How it works</div><div style="position:absolute;left:595px;top:264px;width:1266px;height:616px;background:#e2e2e2;"></div><div style="position:absolute;left:595px;top:264px;width:1266px;height:40px;background:#98b2d1;"></div><svg style="position:absolute;left:640px;top:270px;overflow:visible" width="34" height="30" viewBox="0 0 34 30">
<rect x="3.2" y="2.4" width="27.8" height="23" fill="#fff"/>
<rect x="18.5" y="3.2" width="11.8" height="21.6" fill="#fff" stroke="#9cc49c" stroke-width="0.9"/>
<path d="M18.5 4.2 H30 M18.5 23.8 H30" stroke="#7ca06a" stroke-width="0.8"/>
<g fill="#1a9f58">
<rect x="19.6" y="5.6" width="4.3" height="2.5"/><rect x="24.5" y="5.6" width="4.3" height="2.5"/>
<rect x="19.6" y="8.9" width="4.3" height="2.5"/><rect x="24.5" y="8.9" width="4.3" height="2.5"/>
<rect x="19.6" y="12.2" width="4.3" height="2.5"/><rect x="24.5" y="12.2" width="4.3" height="2.5"/>
<rect x="19.6" y="15.5" width="4.3" height="2.5"/><rect x="24.5" y="15.5" width="4.3" height="2.5"/>
<rect x="19.6" y="18.8" width="4.3" height="2.5"/><rect x="24.5" y="18.8" width="4.3" height="2.5"/>
</g>
<path d="M3.4 2.9 L18.9 0.8 V27 L3.4 25 Z" fill="#fff"/>
<path d="M4.1 3.6 L18.3 1.6 V26.2 L4.1 24.2 Z" fill="#389b69"/>
<path d="M8.3 9.6 L13.8 18.3 M13.8 9.6 L8.3 18.3" stroke="#fff" stroke-width="1.7"/>
</svg><svg style="position:absolute;left:1783px;top:273px;overflow:visible" width="30" height="22" viewBox="0 0 30 22">
<path d="M6.3 2.5 Q15 1.9 23.7 2.5 Q27 2.8 27.2 6 Q27.5 11 27.2 16 Q27 19.2 23.7 19.5 Q15 20.1 6.3 19.5 Q3 19.2 2.8 16 Q2.5 11 2.8 6 Q3 2.8 6.3 2.5 Z" fill="#ff3d00" stroke="#5a3a3a" stroke-opacity="0.55" stroke-width="0.7"/>
<path d="M13 7 L20 11.1 L13 15.2 Z" fill="#fff"/>
</svg><div style="position:absolute;left:723.58px;top:278px;font-size:13.4px;font-weight:normal;color:#000;white-space:pre;line-height:normal;transform:scaleX(0.9184);transform-origin:0 0;">EXCEL</div><div style="position:absolute;left:873.36px;top:267px;font-size:14px;font-weight:normal;color:#000;white-space:pre;line-height:normal;transform:scaleX(1.0422);transform-origin:0 0;">Export dynamic block information to Excel</div><svg style="position:absolute;left:640px;top:310px;overflow:visible" width="34" height="30" viewBox="0 0 34 30">
<rect x="3.2" y="2.4" width="27.8" height="23" fill="#fff"/>
<rect x="18.5" y="3.2" width="11.8" height="21.6" fill="#fff" stroke="#9cc49c" stroke-width="0.9"/>
<path d="M18.5 4.2 H30 M18.5 23.8 H30" stroke="#7ca06a" stroke-width="0.8"/>
<g fill="#1a9f58">
<rect x="19.6" y="5.6" width="4.3" height="2.5"/><rect x="24.5" y="5.6" width="4.3" height="2.5"/>
<rect x="19.6" y="8.9" width="4.3" height="2.5"/><rect x="24.5" y="8.9" width="4.3" height="2.5"/>
<rect x="19.6" y="12.2" width="4.3" height="2.5"/><rect x="24.5" y="12.2" width="4.3" height="2.5"/>
<rect x="19.6" y="15.5" width="4.3" height="2.5"/><rect x="24.5" y="15.5" width="4.3" height="2.5"/>
<rect x="19.6" y="18.8" width="4.3" height="2.5"/><rect x="24.5" y="18.8" width="4.3" height="2.5"/>
</g>
<path d="M3.4 2.9 L18.9 0.8 V27 L3.4 25 Z" fill="#fff"/>
<path d="M4.1 3.6 L18.3 1.6 V26.2 L4.1 24.2 Z" fill="#389b69"/>
<path d="M8.3 9.6 L13.8 18.3 M13.8 9.6 L8.3 18.3" stroke="#fff" stroke-width="1.7"/>
</svg><svg style="position:absolute;left:1783px;top:313px;overflow:visible" width="30" height="22" viewBox="0 0 30 22">
<path d="M6.3 2.5 Q15 1.9 23.7 2.5 Q27 2.8 27.2 6 Q27.5 11 27.2 16 Q27 19.2 23.7 19.5 Q15 20.1 6.3 19.5 Q3 19.2 2.8 16 Q2.5 11 2.8 6 Q3 2.8 6.3 2.5 Z" fill="#ff3d00" stroke="#5a3a3a" stroke-opacity="0.55" stroke-width="0.7"/>
<path d="M13 7 L20 11.1 L13 15.2 Z" fill="#fff"/>
</svg><div style="position:absolute;left:723.58px;top:318px;font-size:13.4px;font-weight:normal;color:#000;white-space:pre;line-height:normal;transform:scaleX(0.9184);transform-origin:0 0;">EXCEL</div><div style="position:absolute;left:873.35px;top:307px;font-size:14px;font-weight:normal;color:#000;white-space:pre;line-height:normal;transform:scaleX(1.0484);transform-origin:0 0;">Export attributes to Excel</div><svg style="position:absolute;left:640px;top:350px;overflow:visible" width="34" height="30" viewBox="0 0 34 30">
<rect x="3.2" y="2.4" width="27.8" height="23" fill="#fff"/>
<rect x="18.5" y="3.2" width="11.8" height="21.6" fill="#fff" stroke="#9cc49c" stroke-width="0.9"/>
<path d="M18.5 4.2 H30 M18.5 23.8 H30" stroke="#7ca06a" stroke-width="0.8"/>
<g fill="#1a9f58">
<rect x="19.6" y="5.6" width="4.3" height="2.5"/><rect x="24.5" y="5.6" width="4.3" height="2.5"/>
<rect x="19.6" y="8.9" width="4.3" height="2.5"/><rect x="24.5" y="8.9" width="4.3" height="2.5"/>
<rect x="19.6" y="12.2" width="4.3" height="2.5"/><rect x="24.5" y="12.2" width="4.3" height="2.5"/>
<rect x="19.6" y="15.5" width="4.3" height="2.5"/><rect x="24.5" y="15.5" width="4.3" height="2.5"/>
<rect x="19.6" y="18.8" width="4.3" height="2.5"/><rect x="24.5" y="18.8" width="4.3" height="2.5"/>
</g>
<path d="M3.4 2.9 L18.9 0.8 V27 L3.4 25 Z" fill="#fff"/>
<path d="M4.1 3.6 L18.3 1.6 V26.2 L4.1 24.2 Z" fill="#389b69"/>
<path d="M8.3 9.6 L13.8 18.3 M13.8 9.6 L8.3 18.3" stroke="#fff" stroke-width="1.7"/>
</svg><svg style="position:absolute;left:1783px;top:353px;overflow:visible" width="30" height="22" viewBox="0 0 30 22">
<path d="M6.3 2.5 Q15 1.9 23.7 2.5 Q27 2.8 27.2 6 Q27.5 11 27.2 16 Q27 19.2 23.7 19.5 Q15 20.1 6.3 19.5 Q3 19.2 2.8 16 Q2.5 11 2.8 6 Q3 2.8 6.3 2.5 Z" fill="#ff3d00" stroke="#5a3a3a" stroke-opacity="0.55" stroke-width="0.7"/>
<path d="M13 7 L20 11.1 L13 15.2 Z" fill="#fff"/>
</svg><div style="position:absolute;left:723.58px;top:358px;font-size:13.4px;font-weight:normal;color:#000;white-space:pre;line-height:normal;transform:scaleX(0.9184);transform-origin:0 0;">EXCEL</div><div style="position:absolute;left:873.35px;top:347px;font-size:14px;font-weight:normal;color:#000;white-space:pre;line-height:normal;transform:scaleX(1.0461);transform-origin:0 0;">Export Attributes to Excel With File Selection</div><svg style="position:absolute;left:640px;top:390px;overflow:visible" width="34" height="30" viewBox="0 0 34 30">
<rect x="3.2" y="2.4" width="27.8" height="23" fill="#fff"/>
<rect x="18.5" y="3.2" width="11.8" height="21.6" fill="#fff" stroke="#9cc49c" stroke-width="0.9"/>
<path d="M18.5 4.2 H30 M18.5 23.8 H30" stroke="#7ca06a" stroke-width="0.8"/>
<g fill="#1a9f58">
<rect x="19.6" y="5.6" width="4.3" height="2.5"/><rect x="24.5" y="5.6" width="4.3" height="2.5"/>
<rect x="19.6" y="8.9" width="4.3" height="2.5"/><rect x="24.5" y="8.9" width="4.3" height="2.5"/>
<rect x="19.6" y="12.2" width="4.3" height="2.5"/><rect x="24.5" y="12.2" width="4.3" height="2.5"/>
<rect x="19.6" y="15.5" width="4.3" height="2.5"/><rect x="24.5" y="15.5" width="4.3" height="2.5"/>
<rect x="19.6" y="18.8" width="4.3" height="2.5"/><rect x="24.5" y="18.8" width="4.3" height="2.5"/>
</g>
<path d="M3.4 2.9 L18.9 0.8 V27 L3.4 25 Z" fill="#fff"/>
<path d="M4.1 3.6 L18.3 1.6 V26.2 L4.1 24.2 Z" fill="#389b69"/>
<path d="M8.3 9.6 L13.8 18.3 M13.8 9.6 L8.3 18.3" stroke="#fff" stroke-width="1.7"/>
</svg><svg style="position:absolute;left:1783px;top:393px;overflow:visible" width="30" height="22" viewBox="0 0 30 22">
<path d="M6.3 2.5 Q15 1.9 23.7 2.5 Q27 2.8 27.2 6 Q27.5 11 27.2 16 Q27 19.2 23.7 19.5 Q15 20.1 6.3 19.5 Q3 19.2 2.8 16 Q2.5 11 2.8 6 Q3 2.8 6.3 2.5 Z" fill="#ff3d00" stroke="#5a3a3a" stroke-opacity="0.55" stroke-width="0.7"/>
<path d="M13 7 L20 11.1 L13 15.2 Z" fill="#fff"/>
</svg><div style="position:absolute;left:723.58px;top:398px;font-size:13.4px;font-weight:normal;color:#000;white-space:pre;line-height:normal;transform:scaleX(0.9184);transform-origin:0 0;">EXCEL</div><div style="position:absolute;left:873.37px;top:387px;font-size:14px;font-weight:normal;color:#000;white-space:pre;line-height:normal;transform:scaleX(1.0259);transform-origin:0 0;">Import attribute values from EXCEL</div><svg style="position:absolute;left:640px;top:430px;overflow:visible" width="34" height="30" viewBox="0 0 34 30">
<rect x="3.2" y="2.4" width="27.8" height="23" fill="#fff"/>
<rect x="18.5" y="3.2" width="11.8" height="21.6" fill="#fff" stroke="#9cc49c" stroke-width="0.9"/>
<path d="M18.5 4.2 H30 M18.5 23.8 H30" stroke="#7ca06a" stroke-width="0.8"/>
<g fill="#1a9f58">
<rect x="19.6" y="5.6" width="4.3" height="2.5"/><rect x="24.5" y="5.6" width="4.3" height="2.5"/>
<rect x="19.6" y="8.9" width="4.3" height="2.5"/><rect x="24.5" y="8.9" width="4.3" height="2.5"/>
<rect x="19.6" y="12.2" width="4.3" height="2.5"/><rect x="24.5" y="12.2" width="4.3" height="2.5"/>
<rect x="19.6" y="15.5" width="4.3" height="2.5"/><rect x="24.5" y="15.5" width="4.3" height="2.5"/>
<rect x="19.6" y="18.8" width="4.3" height="2.5"/><rect x="24.5" y="18.8" width="4.3" height="2.5"/>
</g>
<path d="M3.4 2.9 L18.9 0.8 V27 L3.4 25 Z" fill="#fff"/>
<path d="M4.1 3.6 L18.3 1.6 V26.2 L4.1 24.2 Z" fill="#389b69"/>
<path d="M8.3 9.6 L13.8 18.3 M13.8 9.6 L8.3 18.3" stroke="#fff" stroke-width="1.7"/>
</svg><svg style="position:absolute;left:1783px;top:433px;overflow:visible" width="30" height="22" viewBox="0 0 30 22">
<path d="M6.3 2.5 Q15 1.9 23.7 2.5 Q27 2.8 27.2 6 Q27.5 11 27.2 16 Q27 19.2 23.7 19.5 Q15 20.1 6.3 19.5 Q3 19.2 2.8 16 Q2.5 11 2.8 6 Q3 2.8 6.3 2.5 Z" fill="#ff3d00" stroke="#5a3a3a" stroke-opacity="0.55" stroke-width="0.7"/>
<path d="M13 7 L20 11.1 L13 15.2 Z" fill="#fff"/>
</svg><div style="position:absolute;left:723.58px;top:438px;font-size:13.4px;font-weight:normal;color:#000;white-space:pre;line-height:normal;transform:scaleX(0.9184);transform-origin:0 0;">EXCEL</div><div style="position:absolute;left:873.35px;top:427px;font-size:14px;font-weight:normal;color:#000;white-space:pre;line-height:normal;transform:scaleX(1.0546);transform-origin:0 0;">Import Attributes to Excel With File Selection</div><svg style="position:absolute;left:640px;top:470px;overflow:visible" width="34" height="30" viewBox="0 0 34 30">
<rect x="3.2" y="2.4" width="27.8" height="23" fill="#fff"/>
<rect x="18.5" y="3.2" width="11.8" height="21.6" fill="#fff" stroke="#9cc49c" stroke-width="0.9"/>
<path d="M18.5 4.2 H30 M18.5 23.8 H30" stroke="#7ca06a" stroke-width="0.8"/>
<g fill="#1a9f58">
<rect x="19.6" y="5.6" width="4.3" height="2.5"/><rect x="24.5" y="5.6" width="4.3" height="2.5"/>
<rect x="19.6" y="8.9" width="4.3" height="2.5"/><rect x="24.5" y="8.9" width="4.3" height="2.5"/>
<rect x="19.6" y="12.2" width="4.3" height="2.5"/><rect x="24.5" y="12.2" width="4.3" height="2.5"/>
<rect x="19.6" y="15.5" width="4.3" height="2.5"/><rect x="24.5" y="15.5" width="4.3" height="2.5"/>
<rect x="19.6" y="18.8" width="4.3" height="2.5"/><rect x="24.5" y="18.8" width="4.3" height="2.5"/>
</g>
<path d="M3.4 2.9 L18.9 0.8 V27 L3.4 25 Z" fill="#fff"/>
<path d="M4.1 3.6 L18.3 1.6 V26.2 L4.1 24.2 Z" fill="#389b69"/>
<path d="M8.3 9.6 L13.8 18.3 M13.8 9.6 L8.3 18.3" stroke="#fff" stroke-width="1.7"/>
</svg><svg style="position:absolute;left:1783px;top:473px;overflow:visible" width="30" height="22" viewBox="0 0 30 22">
<path d="M6.3 2.5 Q15 1.9 23.7 2.5 Q27 2.8 27.2 6 Q27.5 11 27.2 16 Q27 19.2 23.7 19.5 Q15 20.1 6.3 19.5 Q3 19.2 2.8 16 Q2.5 11 2.8 6 Q3 2.8 6.3 2.5 Z" fill="#ff3d00" stroke="#5a3a3a" stroke-opacity="0.55" stroke-width="0.7"/>
<path d="M13 7 L20 11.1 L13 15.2 Z" fill="#fff"/>
</svg><div style="position:absolute;left:723.58px;top:478px;font-size:13.4px;font-weight:normal;color:#000;white-space:pre;line-height:normal;transform:scaleX(0.9184);transform-origin:0 0;">EXCEL</div><div style="position:absolute;left:873.40px;top:467px;font-size:14px;font-weight:normal;color:#000;white-space:pre;line-height:normal;transform:scaleX(0.9959);transform-origin:0 0;">Data Update to EXCEL Files</div><svg style="position:absolute;left:640px;top:510px;overflow:visible" width="34" height="30" viewBox="0 0 34 30">
<rect x="3.2" y="2.4" width="27.8" height="23" fill="#fff"/>
<rect x="18.5" y="3.2" width="11.8" height="21.6" fill="#fff" stroke="#9cc49c" stroke-width="0.9"/>
<path d="M18.5 4.2 H30 M18.5 23.8 H30" stroke="#7ca06a" stroke-width="0.8"/>
<g fill="#1a9f58">
<rect x="19.6" y="5.6" width="4.3" height="2.5"/><rect x="24.5" y="5.6" width="4.3" height="2.5"/>
<rect x="19.6" y="8.9" width="4.3" height="2.5"/><rect x="24.5" y="8.9" width="4.3" height="2.5"/>
<rect x="19.6" y="12.2" width="4.3" height="2.5"/><rect x="24.5" y="12.2" width="4.3" height="2.5"/>
<rect x="19.6" y="15.5" width="4.3" height="2.5"/><rect x="24.5" y="15.5" width="4.3" height="2.5"/>
<rect x="19.6" y="18.8" width="4.3" height="2.5"/><rect x="24.5" y="18.8" width="4.3" height="2.5"/>
</g>
<path d="M3.4 2.9 L18.9 0.8 V27 L3.4 25 Z" fill="#fff"/>
<path d="M4.1 3.6 L18.3 1.6 V26.2 L4.1 24.2 Z" fill="#389b69"/>
<path d="M8.3 9.6 L13.8 18.3 M13.8 9.6 L8.3 18.3" stroke="#fff" stroke-width="1.7"/>
</svg><svg style="position:absolute;left:1783px;top:513px;overflow:visible" width="30" height="22" viewBox="0 0 30 22">
<path d="M6.3 2.5 Q15 1.9 23.7 2.5 Q27 2.8 27.2 6 Q27.5 11 27.2 16 Q27 19.2 23.7 19.5 Q15 20.1 6.3 19.5 Q3 19.2 2.8 16 Q2.5 11 2.8 6 Q3 2.8 6.3 2.5 Z" fill="#ff3d00" stroke="#5a3a3a" stroke-opacity="0.55" stroke-width="0.7"/>
<path d="M13 7 L20 11.1 L13 15.2 Z" fill="#fff"/>
</svg><div style="position:absolute;left:723.58px;top:518px;font-size:13.4px;font-weight:normal;color:#000;white-space:pre;line-height:normal;transform:scaleX(0.9184);transform-origin:0 0;">EXCEL</div><div style="position:absolute;left:873.37px;top:507px;font-size:14px;font-weight:normal;color:#000;white-space:pre;line-height:normal;transform:scaleX(1.0268);transform-origin:0 0;">Import dynamic block information from EXCEL</div><svg style="position:absolute;left:640px;top:550px;overflow:visible" width="34" height="30" viewBox="0 0 34 30">
<rect x="3.2" y="2.4" width="27.8" height="23" fill="#fff"/>
<rect x="18.5" y="3.2" width="11.8" height="21.6" fill="#fff" stroke="#9cc49c" stroke-width="0.9"/>
<path d="M18.5 4.2 H30 M18.5 23.8 H30" stroke="#7ca06a" stroke-width="0.8"/>
<g fill="#1a9f58">
<rect x="19.6" y="5.6" width="4.3" height="2.5"/><rect x="24.5" y="5.6" width="4.3" height="2.5"/>
<rect x="19.6" y="8.9" width="4.3" height="2.5"/><rect x="24.5" y="8.9" width="4.3" height="2.5"/>
<rect x="19.6" y="12.2" width="4.3" height="2.5"/><rect x="24.5" y="12.2" width="4.3" height="2.5"/>
<rect x="19.6" y="15.5" width="4.3" height="2.5"/><rect x="24.5" y="15.5" width="4.3" height="2.5"/>
<rect x="19.6" y="18.8" width="4.3" height="2.5"/><rect x="24.5" y="18.8" width="4.3" height="2.5"/>
</g>
<path d="M3.4 2.9 L18.9 0.8 V27 L3.4 25 Z" fill="#fff"/>
<path d="M4.1 3.6 L18.3 1.6 V26.2 L4.1 24.2 Z" fill="#389b69"/>
<path d="M8.3 9.6 L13.8 18.3 M13.8 9.6 L8.3 18.3" stroke="#fff" stroke-width="1.7"/>
</svg><svg style="position:absolute;left:1783px;top:553px;overflow:visible" width="30" height="22" viewBox="0 0 30 22">
<path d="M6.3 2.5 Q15 1.9 23.7 2.5 Q27 2.8 27.2 6 Q27.5 11 27.2 16 Q27 19.2 23.7 19.5 Q15 20.1 6.3 19.5 Q3 19.2 2.8 16 Q2.5 11 2.8 6 Q3 2.8 6.3 2.5 Z" fill="#ff3d00" stroke="#5a3a3a" stroke-opacity="0.55" stroke-width="0.7"/>
<path d="M13 7 L20 11.1 L13 15.2 Z" fill="#fff"/>
</svg><div style="position:absolute;left:723.58px;top:558px;font-size:13.4px;font-weight:normal;color:#000;white-space:pre;line-height:normal;transform:scaleX(0.9184);transform-origin:0 0;">EXCEL</div><div style="position:absolute;left:873.35px;top:547px;font-size:14px;font-weight:normal;color:#000;white-space:pre;line-height:normal;transform:scaleX(1.0487);transform-origin:0 0;">Import attributes from paper spaces from Excel</div><svg style="position:absolute;left:640px;top:590px;overflow:visible" width="34" height="30" viewBox="0 0 34 30">
<rect x="3.2" y="2.4" width="27.8" height="23" fill="#fff"/>
<rect x="18.5" y="3.2" width="11.8" height="21.6" fill="#fff" stroke="#9cc49c" stroke-width="0.9"/>
<path d="M18.5 4.2 H30 M18.5 23.8 H30" stroke="#7ca06a" stroke-width="0.8"/>
<g fill="#1a9f58">
<rect x="19.6" y="5.6" width="4.3" height="2.5"/><rect x="24.5" y="5.6" width="4.3" height="2.5"/>
<rect x="19.6" y="8.9" width="4.3" height="2.5"/><rect x="24.5" y="8.9" width="4.3" height="2.5"/>
<rect x="19.6" y="12.2" width="4.3" height="2.5"/><rect x="24.5" y="12.2" width="4.3" height="2.5"/>
<rect x="19.6" y="15.5" width="4.3" height="2.5"/><rect x="24.5" y="15.5" width="4.3" height="2.5"/>
<rect x="19.6" y="18.8" width="4.3" height="2.5"/><rect x="24.5" y="18.8" width="4.3" height="2.5"/>
</g>
<path d="M3.4 2.9 L18.9 0.8 V27 L3.4 25 Z" fill="#fff"/>
<path d="M4.1 3.6 L18.3 1.6 V26.2 L4.1 24.2 Z" fill="#389b69"/>
<path d="M8.3 9.6 L13.8 18.3 M13.8 9.6 L8.3 18.3" stroke="#fff" stroke-width="1.7"/>
</svg><svg style="position:absolute;left:1783px;top:593px;overflow:visible" width="30" height="22" viewBox="0 0 30 22">
<path d="M6.3 2.5 Q15 1.9 23.7 2.5 Q27 2.8 27.2 6 Q27.5 11 27.2 16 Q27 19.2 23.7 19.5 Q15 20.1 6.3 19.5 Q3 19.2 2.8 16 Q2.5 11 2.8 6 Q3 2.8 6.3 2.5 Z" fill="#ff3d00" stroke="#5a3a3a" stroke-opacity="0.55" stroke-width="0.7"/>
<path d="M13 7 L20 11.1 L13 15.2 Z" fill="#fff"/>
</svg><div style="position:absolute;left:723.58px;top:598px;font-size:13.4px;font-weight:normal;color:#000;white-space:pre;line-height:normal;transform:scaleX(0.9184);transform-origin:0 0;">EXCEL</div><div style="position:absolute;left:873.36px;top:587px;font-size:14px;font-weight:normal;color:#000;white-space:pre;line-height:normal;transform:scaleX(1.0417);transform-origin:0 0;">Export attributes from paper spaces to Excel</div><svg style="position:absolute;left:640px;top:630px;overflow:visible" width="34" height="30" viewBox="0 0 34 30">
<rect x="3.2" y="2.4" width="27.8" height="23" fill="#fff"/>
<rect x="18.5" y="3.2" width="11.8" height="21.6" fill="#fff" stroke="#9cc49c" stroke-width="0.9"/>
<path d="M18.5 4.2 H30 M18.5 23.8 H30" stroke="#7ca06a" stroke-width="0.8"/>
<g fill="#1a9f58">
<rect x="19.6" y="5.6" width="4.3" height="2.5"/><rect x="24.5" y="5.6" width="4.3" height="2.5"/>
<rect x="19.6" y="8.9" width="4.3" height="2.5"/><rect x="24.5" y="8.9" width="4.3" height="2.5"/>
<rect x="19.6" y="12.2" width="4.3" height="2.5"/><rect x="24.5" y="12.2" width="4.3" height="2.5"/>
<rect x="19.6" y="15.5" width="4.3" height="2.5"/><rect x="24.5" y="15.5" width="4.3" height="2.5"/>
<rect x="19.6" y="18.8" width="4.3" height="2.5"/><rect x="24.5" y="18.8" width="4.3" height="2.5"/>
</g>
<path d="M3.4 2.9 L18.9 0.8 V27 L3.4 25 Z" fill="#fff"/>
<path d="M4.1 3.6 L18.3 1.6 V26.2 L4.1 24.2 Z" fill="#389b69"/>
<path d="M8.3 9.6 L13.8 18.3 M13.8 9.6 L8.3 18.3" stroke="#fff" stroke-width="1.7"/>
</svg><svg style="position:absolute;left:1783px;top:633px;overflow:visible" width="30" height="22" viewBox="0 0 30 22">
<path d="M6.3 2.5 Q15 1.9 23.7 2.5 Q27 2.8 27.2 6 Q27.5 11 27.2 16 Q27 19.2 23.7 19.5 Q15 20.1 6.3 19.5 Q3 19.2 2.8 16 Q2.5 11 2.8 6 Q3 2.8 6.3 2.5 Z" fill="#ff3d00" stroke="#5a3a3a" stroke-opacity="0.55" stroke-width="0.7"/>
<path d="M13 7 L20 11.1 L13 15.2 Z" fill="#fff"/>
</svg><div style="position:absolute;left:723.58px;top:638px;font-size:13.4px;font-weight:normal;color:#000;white-space:pre;line-height:normal;transform:scaleX(0.9184);transform-origin:0 0;">EXCEL</div><div style="position:absolute;left:873.40px;top:627px;font-size:14px;font-weight:normal;color:#000;white-space:pre;line-height:normal;transform:scaleX(1.0030);transform-origin:0 0;">Export texts from MODEL space to EXCEL</div><svg style="position:absolute;left:640px;top:670px;overflow:visible" width="34" height="30" viewBox="0 0 34 30">
<rect x="3.2" y="2.4" width="27.8" height="23" fill="#fff"/>
<rect x="18.5" y="3.2" width="11.8" height="21.6" fill="#fff" stroke="#9cc49c" stroke-width="0.9"/>
<path d="M18.5 4.2 H30 M18.5 23.8 H30" stroke="#7ca06a" stroke-width="0.8"/>
<g fill="#1a9f58">
<rect x="19.6" y="5.6" width="4.3" height="2.5"/><rect x="24.5" y="5.6" width="4.3" height="2.5"/>
<rect x="19.6" y="8.9" width="4.3" height="2.5"/><rect x="24.5" y="8.9" width="4.3" height="2.5"/>
<rect x="19.6" y="12.2" width="4.3" height="2.5"/><rect x="24.5" y="12.2" width="4.3" height="2.5"/>
<rect x="19.6" y="15.5" width="4.3" height="2.5"/><rect x="24.5" y="15.5" width="4.3" height="2.5"/>
<rect x="19.6" y="18.8" width="4.3" height="2.5"/><rect x="24.5" y="18.8" width="4.3" height="2.5"/>
</g>
<path d="M3.4 2.9 L18.9 0.8 V27 L3.4 25 Z" fill="#fff"/>
<path d="M4.1 3.6 L18.3 1.6 V26.2 L4.1 24.2 Z" fill="#389b69"/>
<path d="M8.3 9.6 L13.8 18.3 M13.8 9.6 L8.3 18.3" stroke="#fff" stroke-width="1.7"/>
</svg><svg style="position:absolute;left:1783px;top:673px;overflow:visible" width="30" height="22" viewBox="0 0 30 22">
<path d="M6.3 2.5 Q15 1.9 23.7 2.5 Q27 2.8 27.2 6 Q27.5 11 27.2 16 Q27 19.2 23.7 19.5 Q15 20.1 6.3 19.5 Q3 19.2 2.8 16 Q2.5 11 2.8 6 Q3 2.8 6.3 2.5 Z" fill="#ff3d00" stroke="#5a3a3a" stroke-opacity="0.55" stroke-width="0.7"/>
<path d="M13 7 L20 11.1 L13 15.2 Z" fill="#fff"/>
</svg><div style="position:absolute;left:723.58px;top:678px;font-size:13.4px;font-weight:normal;color:#000;white-space:pre;line-height:normal;transform:scaleX(0.9184);transform-origin:0 0;">EXCEL</div><div style="position:absolute;left:873.39px;top:667px;font-size:14px;font-weight:normal;color:#000;white-space:pre;line-height:normal;transform:scaleX(1.0111);transform-origin:0 0;">Export texts from paper spaces to EXCEL</div><svg style="position:absolute;left:640px;top:710px;overflow:visible" width="34" height="30" viewBox="0 0 34 30">
<rect x="3.2" y="2.4" width="27.8" height="23" fill="#fff"/>
<rect x="18.5" y="3.2" width="11.8" height="21.6" fill="#fff" stroke="#9cc49c" stroke-width="0.9"/>
<path d="M18.5 4.2 H30 M18.5 23.8 H30" stroke="#7ca06a" stroke-width="0.8"/>
<g fill="#1a9f58">
<rect x="19.6" y="5.6" width="4.3" height="2.5"/><rect x="24.5" y="5.6" width="4.3" height="2.5"/>
<rect x="19.6" y="8.9" width="4.3" height="2.5"/><rect x="24.5" y="8.9" width="4.3" height="2.5"/>
<rect x="19.6" y="12.2" width="4.3" height="2.5"/><rect x="24.5" y="12.2" width="4.3" height="2.5"/>
<rect x="19.6" y="15.5" width="4.3" height="2.5"/><rect x="24.5" y="15.5" width="4.3" height="2.5"/>
<rect x="19.6" y="18.8" width="4.3" height="2.5"/><rect x="24.5" y="18.8" width="4.3" height="2.5"/>
</g>
<path d="M3.4 2.9 L18.9 0.8 V27 L3.4 25 Z" fill="#fff"/>
<path d="M4.1 3.6 L18.3 1.6 V26.2 L4.1 24.2 Z" fill="#389b69"/>
<path d="M8.3 9.6 L13.8 18.3 M13.8 9.6 L8.3 18.3" stroke="#fff" stroke-width="1.7"/>
</svg><svg style="position:absolute;left:1783px;top:713px;overflow:visible" width="30" height="22" viewBox="0 0 30 22">
<path d="M6.3 2.5 Q15 1.9 23.7 2.5 Q27 2.8 27.2 6 Q27.5 11 27.2 16 Q27 19.2 23.7 19.5 Q15 20.1 6.3 19.5 Q3 19.2 2.8 16 Q2.5 11 2.8 6 Q3 2.8 6.3 2.5 Z" fill="#ff3d00" stroke="#5a3a3a" stroke-opacity="0.55" stroke-width="0.7"/>
<path d="M13 7 L20 11.1 L13 15.2 Z" fill="#fff"/>
</svg><div style="position:absolute;left:723.58px;top:718px;font-size:13.4px;font-weight:normal;color:#000;white-space:pre;line-height:normal;transform:scaleX(0.9184);transform-origin:0 0;">EXCEL</div><div style="position:absolute;left:873.34px;top:707px;font-size:14px;font-weight:normal;color:#000;white-space:pre;line-height:normal;transform:scaleX(1.0577);transform-origin:0 0;">Import the attributes of all DWGs from a single Excel file</div><svg style="position:absolute;left:640px;top:750px;overflow:visible" width="34" height="30" viewBox="0 0 34 30">
<rect x="3.2" y="2.4" width="27.8" height="23" fill="#fff"/>
<rect x="18.5" y="3.2" width="11.8" height="21.6" fill="#fff" stroke="#9cc49c" stroke-width="0.9"/>
<path d="M18.5 4.2 H30 M18.5 23.8 H30" stroke="#7ca06a" stroke-width="0.8"/>
<g fill="#1a9f58">
<rect x="19.6" y="5.6" width="4.3" height="2.5"/><rect x="24.5" y="5.6" width="4.3" height="2.5"/>
<rect x="19.6" y="8.9" width="4.3" height="2.5"/><rect x="24.5" y="8.9" width="4.3" height="2.5"/>
<rect x="19.6" y="12.2" width="4.3" height="2.5"/><rect x="24.5" y="12.2" width="4.3" height="2.5"/>
<rect x="19.6" y="15.5" width="4.3" height="2.5"/><rect x="24.5" y="15.5" width="4.3" height="2.5"/>
<rect x="19.6" y="18.8" width="4.3" height="2.5"/><rect x="24.5" y="18.8" width="4.3" height="2.5"/>
</g>
<path d="M3.4 2.9 L18.9 0.8 V27 L3.4 25 Z" fill="#fff"/>
<path d="M4.1 3.6 L18.3 1.6 V26.2 L4.1 24.2 Z" fill="#389b69"/>
<path d="M8.3 9.6 L13.8 18.3 M13.8 9.6 L8.3 18.3" stroke="#fff" stroke-width="1.7"/>
</svg><svg style="position:absolute;left:1783px;top:753px;overflow:visible" width="30" height="22" viewBox="0 0 30 22">
<path d="M6.3 2.5 Q15 1.9 23.7 2.5 Q27 2.8 27.2 6 Q27.5 11 27.2 16 Q27 19.2 23.7 19.5 Q15 20.1 6.3 19.5 Q3 19.2 2.8 16 Q2.5 11 2.8 6 Q3 2.8 6.3 2.5 Z" fill="#ff3d00" stroke="#5a3a3a" stroke-opacity="0.55" stroke-width="0.7"/>
<path d="M13 7 L20 11.1 L13 15.2 Z" fill="#fff"/>
</svg><div style="position:absolute;left:723.58px;top:758px;font-size:13.4px;font-weight:normal;color:#000;white-space:pre;line-height:normal;transform:scaleX(0.9184);transform-origin:0 0;">EXCEL</div><div style="position:absolute;left:873.35px;top:747px;font-size:14px;font-weight:normal;color:#000;white-space:pre;line-height:normal;transform:scaleX(1.0480);transform-origin:0 0;">Export attributes from all DWGs to one Excel file</div><svg style="position:absolute;left:640px;top:789px;overflow:visible" width="34" height="30" viewBox="0 0 34 30">
<path d="M3 9.3 L20.8 4.5 L31.2 15.2 L12.9 24.3 Z" fill="#cf2222"/>
<path d="M3 9.3 L20.8 4.5 L15 14 L12.9 24.3 Z" fill="#a10c0c"/>
<path d="M20.8 4.5 L31.2 15.2 L22 17.5 Z" fill="#ee4444" opacity="0.8"/>
<path d="M3 9.3 L12.9 24.3 L13.6 25.2 L3.3 10.8 Z" fill="#5a0505"/>
<path d="M12.9 24.3 L31.2 15.2 L31.4 16.3 L13.6 25.2 Z" fill="#4a0606"/>
<text x="0" y="0" font-family="Liberation Sans" font-size="6.5" font-weight="bold" fill="#fff" transform="translate(12.5 17.5) rotate(-34)">.pdf</text>
</svg><svg style="position:absolute;left:1783px;top:793px;overflow:visible" width="30" height="22" viewBox="0 0 30 22">
<path d="M6.3 2.5 Q15 1.9 23.7 2.5 Q27 2.8 27.2 6 Q27.5 11 27.2 16 Q27 19.2 23.7 19.5 Q15 20.1 6.3 19.5 Q3 19.2 2.8 16 Q2.5 11 2.8 6 Q3 2.8 6.3 2.5 Z" fill="#ff3d00" stroke="#5a3a3a" stroke-opacity="0.55" stroke-width="0.7"/>
<path d="M13 7 L20 11.1 L13 15.2 Z" fill="#fff"/>
</svg><div style="position:absolute;left:723.54px;top:798px;font-size:13.4px;font-weight:normal;color:#000;white-space:pre;line-height:normal;transform:scaleX(0.9570);transform-origin:0 0;">PDF</div><div style="position:absolute;left:874.40px;top:787px;font-size:14px;font-weight:normal;color:#000;white-space:pre;line-height:normal;transform:scaleX(1.0140);transform-origin:0 0;">Create a PDF of the DWG file</div><svg style="position:absolute;left:640px;top:829px;overflow:visible" width="34" height="30" viewBox="0 0 34 30">
<path d="M3 9.3 L20.8 4.5 L31.2 15.2 L12.9 24.3 Z" fill="#cf2222"/>
<path d="M3 9.3 L20.8 4.5 L15 14 L12.9 24.3 Z" fill="#a10c0c"/>
<path d="M20.8 4.5 L31.2 15.2 L22 17.5 Z" fill="#ee4444" opacity="0.8"/>
<path d="M3 9.3 L12.9 24.3 L13.6 25.2 L3.3 10.8 Z" fill="#5a0505"/>
<path d="M12.9 24.3 L31.2 15.2 L31.4 16.3 L13.6 25.2 Z" fill="#4a0606"/>
<text x="0" y="0" font-family="Liberation Sans" font-size="6.5" font-weight="bold" fill="#fff" transform="translate(12.5 17.5) rotate(-34)">.pdf</text>
</svg><svg style="position:absolute;left:1783px;top:833px;overflow:visible" width="30" height="22" viewBox="0 0 30 22">
<path d="M6.3 2.5 Q15 1.9 23.7 2.5 Q27 2.8 27.2 6 Q27.5 11 27.2 16 Q27 19.2 23.7 19.5 Q15 20.1 6.3 19.5 Q3 19.2 2.8 16 Q2.5 11 2.8 6 Q3 2.8 6.3 2.5 Z" fill="#ff3d00" stroke="#5a3a3a" stroke-opacity="0.55" stroke-width="0.7"/>
<path d="M13 7 L20 11.1 L13 15.2 Z" fill="#fff"/>
</svg><div style="position:absolute;left:723.54px;top:838px;font-size:13.4px;font-weight:normal;color:#000;white-space:pre;line-height:normal;transform:scaleX(0.9570);transform-origin:0 0;">PDF</div><div style="position:absolute;left:874.40px;top:827px;font-size:14px;font-weight:normal;color:#000;white-space:pre;line-height:normal;transform:scaleX(1.0424);transform-origin:0 0;">Create a PDF of the DWG file (with layout selection)</div><svg style="position:absolute;left:640px;top:869px;overflow:visible" width="34" height="30" viewBox="0 0 34 30">
<path d="M3 9.3 L20.8 4.5 L31.2 15.2 L12.9 24.3 Z" fill="#cf2222"/>
<path d="M3 9.3 L20.8 4.5 L15 14 L12.9 24.3 Z" fill="#a10c0c"/>
<path d="M20.8 4.5 L31.2 15.2 L22 17.5 Z" fill="#ee4444" opacity="0.8"/>
<path d="M3 9.3 L12.9 24.3 L13.6 25.2 L3.3 10.8 Z" fill="#5a0505"/>
<path d="M12.9 24.3 L31.2 15.2 L31.4 16.3 L13.6 25.2 Z" fill="#4a0606"/>
<text x="0" y="0" font-family="Liberation Sans" font-size="6.5" font-weight="bold" fill="#fff" transform="translate(12.5 17.5) rotate(-34)">.pdf</text>
</svg><svg style="position:absolute;left:1783px;top:873px;overflow:visible" width="30" height="22" viewBox="0 0 30 22">
<path d="M6.3 2.5 Q15 1.9 23.7 2.5 Q27 2.8 27.2 6 Q27.5 11 27.2 16 Q27 19.2 23.7 19.5 Q15 20.1 6.3 19.5 Q3 19.2 2.8 16 Q2.5 11 2.8 6 Q3 2.8 6.3 2.5 Z" fill="#ff3d00" stroke="#5a3a3a" stroke-opacity="0.55" stroke-width="0.7"/>
<path d="M13 7 L20 11.1 L13 15.2 Z" fill="#fff"/>
</svg><div style="position:absolute;left:873.37px;top:867px;font-size:14px;font-weight:normal;color:#000;white-space:pre;line-height:normal;transform:scaleX(1.0333);transform-origin:0 0;">Print the DWG into multiple PDFs</div><div style="position:absolute;left:1861px;top:244px;width:16px;height:636px;background:#f0f0f0;"></div><div style="position:absolute;left:1861px;top:244px;width:1px;height:636px;background:#ffffff;"></div><div style="position:absolute;left:1869px;top:261px;width:2px;height:146px;background:#858585;"></div><div style="position:absolute;left:293px;top:881px;width:1586px;height:6px;background:#ffffff;"></div><div style="position:absolute;left:293px;top:880px;width:1586px;height:1px;background:#6b6b6b;"></div><div style="position:absolute;left:292px;top:887px;width:1586px;height:124px;background:#f0f0f0;box-sizing:border-box;border:1px solid #6b6b6b;"></div><div style="position:absolute;left:293px;top:888px;width:1584px;height:29px;background:linear-gradient(#fcfcfc,#f7f7f7 45%,#f0f0f0);"></div><div style="position:absolute;left:296px;top:893px;width:1px;height:20px;background:#bdbdbd;"></div><div style="position:absolute;left:297px;top:893px;width:1px;height:20px;background:#ffffff;"></div><svg style="position:absolute;left:305px;top:894px;overflow:visible" width="20" height="20" viewBox="0 0 20 20">
<circle cx="9.3" cy="9.3" r="6.5" fill="#fdc52d"/>
<path d="M11 14 L15.3 16.3 L13.5 12 Z" fill="#fdc52d"/>
<circle cx="9.3" cy="6.5" r="0.9" fill="#fff"/>
<path d="M8.2 8.6 H9.9 V12.7 M8 12.7 H11" fill="none" stroke="#fff" stroke-width="1.3"/>
</svg><div style="position:absolute;left:325.00px;top:896px;font-size:12.5px;font-weight:bold;color:#000;white-space:pre;line-height:normal;transform:scaleX(0.9348);transform-origin:0 0;">Execution info:</div><div style="position:absolute;left:425px;top:893px;width:1px;height:20px;background:#bdbdbd;"></div><div style="position:absolute;left:426px;top:893px;width:1px;height:20px;background:#ffffff;"></div><div style="position:absolute;left:294.70px;top:919px;font-size:12.3px;font-weight:normal;color:#000;white-space:pre;line-height:normal;transform:scaleX(0.9774);transform-origin:0 0;">Opening file: C:\Users\user\Downloads\Plan implantation (54).dwg</div><div style="position:absolute;left:293.70px;top:934px;font-size:12px;font-weight:normal;color:#000;white-space:pre;line-height:normal;transform:scaleX(0.9039);transform-origin:0 0;">...............</div><svg style="position:absolute;left:294px;top:951px;overflow:visible" width="295" height="11" viewBox="0 0 295 11"><path d="M0.6 10.2 L4.6 0.6 M5.6 10.2 L9.6 0.6 M10.6 10.2 L14.6 0.6 M15.6 10.2 L19.6 0.6 M20.6 10.2 L24.6 0.6 M25.6 10.2 L29.6 0.6 M30.6 10.2 L34.6 0.6 M35.6 10.2 L39.6 0.6 M40.6 10.2 L44.6 0.6 M45.6 10.2 L49.6 0.6 M50.6 10.2 L54.6 0.6 M55.6 10.2 L59.6 0.6 M60.6 10.2 L64.6 0.6 M65.6 10.2 L69.6 0.6 M70.6 10.2 L74.6 0.6 M75.6 10.2 L79.6 0.6 M80.6 10.2 L84.6 0.6 M85.6 10.2 L89.6 0.6 M90.6 10.2 L94.6 0.6 M95.6 10.2 L99.6 0.6 M100.6 10.2 L104.6 0.6 M105.6 10.2 L109.6 0.6 M110.6 10.2 L114.6 0.6 M115.6 10.2 L119.6 0.6 M120.6 10.2 L124.6 0.6 M125.6 10.2 L129.6 0.6 M130.6 10.2 L134.6 0.6 M135.6 10.2 L139.6 0.6 M140.6 10.2 L144.6 0.6 M145.6 10.2 L149.6 0.6 M150.6 10.2 L154.6 0.6 M155.6 10.2 L159.6 0.6 M160.6 10.2 L164.6 0.6 M165.6 10.2 L169.6 0.6 M170.6 10.2 L174.6 0.6 M175.6 10.2 L179.6 0.6 M180.6 10.2 L184.6 0.6 M185.6 10.2 L189.6 0.6 M190.6 10.2 L194.6 0.6 M195.6 10.2 L199.6 0.6 M200.6 10.2 L204.6 0.6 M205.6 10.2 L209.6 0.6 M210.6 10.2 L214.6 0.6 M215.6 10.2 L219.6 0.6 M220.6 10.2 L224.6 0.6 M225.6 10.2 L229.6 0.6 M230.6 10.2 L234.6 0.6 M235.6 10.2 L239.6 0.6 M240.6 10.2 L244.6 0.6 M245.6 10.2 L249.6 0.6 M250.6 10.2 L254.6 0.6 M255.6 10.2 L259.6 0.6 M260.6 10.2 L264.6 0.6 M265.6 10.2 L269.6 0.6 M270.6 10.2 L274.6 0.6 M275.6 10.2 L279.6 0.6 M280.6 10.2 L284.6 0.6 M285.6 10.2 L289.6 0.6" stroke="#111" stroke-width="0.95"/></svg><div style="position:absolute;left:294.70px;top:964px;font-size:12.3px;font-weight:normal;color:#000;white-space:pre;line-height:normal;transform:scaleX(0.9398);transform-origin:0 0;">10/22/2025 12:02:18 PM - Processing completed</div><svg style="position:absolute;left:294px;top:981px;overflow:visible" width="295" height="11" viewBox="0 0 295 11"><path d="M0.6 10.2 L4.6 0.6 M5.6 10.2 L9.6 0.6 M10.6 10.2 L14.6 0.6 M15.6 10.2 L19.6 0.6 M20.6 10.2 L24.6 0.6 M25.6 10.2 L29.6 0.6 M30.6 10.2 L34.6 0.6 M35.6 10.2 L39.6 0.6 M40.6 10.2 L44.6 0.6 M45.6 10.2 L49.6 0.6 M50.6 10.2 L54.6 0.6 M55.6 10.2 L59.6 0.6 M60.6 10.2 L64.6 0.6 M65.6 10.2 L69.6 0.6 M70.6 10.2 L74.6 0.6 M75.6 10.2 L79.6 0.6 M80.6 10.2 L84.6 0.6 M85.6 10.2 L89.6 0.6 M90.6 10.2 L94.6 0.6 M95.6 10.2 L99.6 0.6 M100.6 10.2 L104.6 0.6 M105.6 10.2 L109.6 0.6 M110.6 10.2 L114.6 0.6 M115.6 10.2 L119.6 0.6 M120.6 10.2 L124.6 0.6 M125.6 10.2 L129.6 0.6 M130.6 10.2 L134.6 0.6 M135.6 10.2 L139.6 0.6 M140.6 10.2 L144.6 0.6 M145.6 10.2 L149.6 0.6 M150.6 10.2 L154.6 0.6 M155.6 10.2 L159.6 0.6 M160.6 10.2 L164.6 0.6 M165.6 10.2 L169.6 0.6 M170.6 10.2 L174.6 0.6 M175.6 10.2 L179.6 0.6 M180.6 10.2 L184.6 0.6 M185.6 10.2 L189.6 0.6 M190.6 10.2 L194.6 0.6 M195.6 10.2 L199.6 0.6 M200.6 10.2 L204.6 0.6 M205.6 10.2 L209.6 0.6 M210.6 10.2 L214.6 0.6 M215.6 10.2 L219.6 0.6 M220.6 10.2 L224.6 0.6 M225.6 10.2 L229.6 0.6 M230.6 10.2 L234.6 0.6 M235.6 10.2 L239.6 0.6 M240.6 10.2 L244.6 0.6 M245.6 10.2 L249.6 0.6 M250.6 10.2 L254.6 0.6 M255.6 10.2 L259.6 0.6 M260.6 10.2 L264.6 0.6 M265.6 10.2 L269.6 0.6 M270.6 10.2 L274.6 0.6 M275.6 10.2 L279.6 0.6 M280.6 10.2 L284.6 0.6 M285.6 10.2 L289.6 0.6" stroke="#111" stroke-width="0.95"/></svg><div style="position:absolute;left:1861px;top:917px;width:16px;height:93px;background:#f0f0f0;"></div><div style="position:absolute;left:1861px;top:917px;width:1px;height:93px;background:#ffffff;"></div><div style="position:absolute;left:1868px;top:964px;width:2px;height:29px;background:#858585;"></div>
</body></html>
